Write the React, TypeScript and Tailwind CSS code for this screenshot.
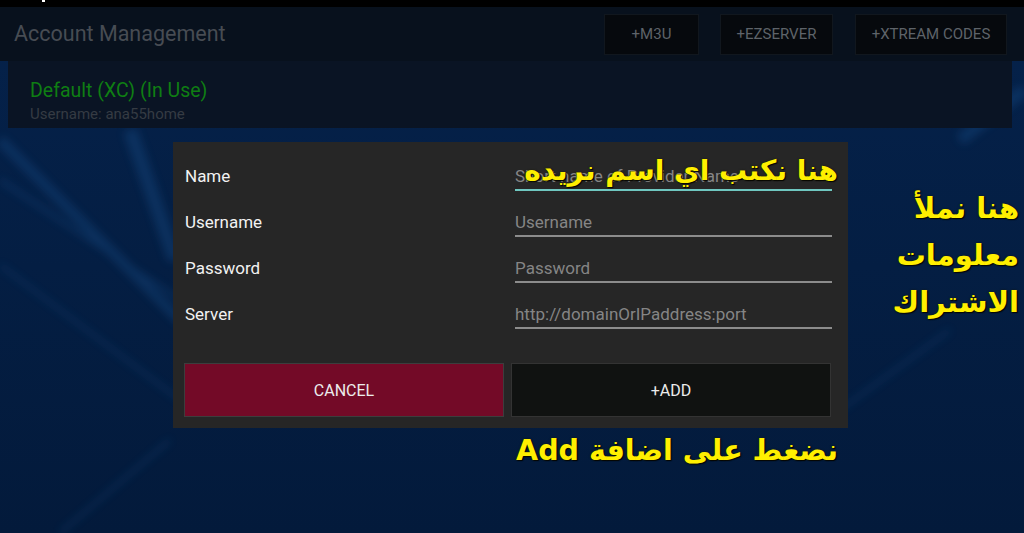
import React from "react";

const roboto = { fontFamily: "Roboto, 'Liberation Sans', sans-serif" };

function Field({ label, placeholder, focused }: { label: string; placeholder: string; focused?: boolean }) {
  return (
    <div className="flex h-[46px] items-center pl-[12px] pr-[16px]">
      <div className="pt-[2px] text-[17px] text-[#f2f2f2]">{label}</div>
      <div
        className={
          "ml-auto flex h-[30px] w-[317px] items-center border-b-2 pt-[3px] " +
          (focused ? "border-[#6fc7c0]" : "border-[#8c8c8c]")
        }
      >
        <span className="whitespace-nowrap text-[17px] text-[#858585]">{placeholder}</span>
      </div>
    </div>
  );
}

export default function App() {
  const ar = "whitespace-nowrap font-['DejaVu_Sans',sans-serif] font-bold text-[#ffef00] [text-shadow:0_0_2px_#1a1a00,1px_1px_1px_#000]";
  return (
    <div className="relative h-[533px] w-[1024px] overflow-hidden bg-[#041b3e]" style={roboto}>
      <svg className="absolute inset-0" width="1024" height="533" viewBox="0 0 1024 533">
        <defs>
          <filter id="b" x="-20%" y="-20%" width="140%" height="140%">
            <feGaussianBlur stdDeviation="4" />
          </filter>
          <linearGradient id="g" x1="0" y1="0" x2="0" y2="1">
            <stop offset="0" stopColor="#05224b" />
            <stop offset="1" stopColor="#031a3b" />
          </linearGradient>
        </defs>
        <rect width="1024" height="533" fill="url(#g)" />
        <g filter="url(#b)" stroke="#1d5a9a" fill="none" opacity="0.3">
          <path d="M0 140 L180 320" strokeWidth="10" />
          <path d="M0 180 L180 300" strokeWidth="4" />
          <path d="M0 265 L180 400" strokeWidth="3" />
          <path d="M840 410 L950 330" strokeWidth="3" />
          <path d="M60 533 L170 440" strokeWidth="3" />
          <path d="M960 140 L1024 90" strokeWidth="12" />
          <path d="M130 130 L175 260" strokeWidth="14" />
        </g>
      </svg>

      <div className="relative flex flex-col">
        <div className="relative h-[7px] bg-black">
          <span className="absolute left-[42px] top-0 h-[2px] w-[3px] bg-white" />
        </div>
        <div className="flex h-[54px] items-center bg-[#08111d]">
          <div className="pl-[14px] text-[21.5px] text-[#474c53]">Account Management</div>
          <div className="ml-auto mr-[17px] flex gap-[21px]">
            <div className="flex h-[41px] w-[95px] items-center justify-center border border-[#11171e] bg-[#06090d] text-[15px] text-[#5e6369]">
              +M3U
            </div>
            <div className="flex h-[41px] w-[113px] items-center justify-center border border-[#11171e] bg-[#06090d] text-[15px] text-[#5e6369]">
              +EZSERVER
            </div>
            <div className="ml-px flex h-[41px] w-[152px] items-center justify-center border border-[#11171e] bg-[#06090d] text-[15px] text-[#5e6369]">
              +XTREAM CODES
            </div>
          </div>
        </div>
        <div className="ml-[8px] mr-[12px] flex h-[67px] flex-col bg-[#0a1424] pl-[22px] pt-[18px]">
          <div className="text-[19.5px] leading-[24px] text-[#0f7e13]">Default (XC) (In Use)</div>
          <div className="mt-[2px] text-[15px] leading-[18px] text-[#353b43]">Username: ana55home</div>
        </div>

        <div className="ml-[173px] mt-[14px] flex h-[286px] w-[675px] flex-col bg-[#262626] pt-[11px]">
          <Field label="Name" placeholder="Short name of Provider Name" focused />
          <Field label="Username" placeholder="Username" />
          <Field label="Password" placeholder="Password" />
          <Field label="Server" placeholder="http://domainOrIPaddress:port" />
          <div className="mt-[26px] flex gap-[7px] pl-[11px]">
            <div className="flex h-[54px] w-[320px] items-center justify-center border border-[#3d3d3d] bg-[#730a27] pt-[2px] text-[16px] text-[#ececec]">
              CANCEL
            </div>
            <div className="flex h-[54px] w-[320px] items-center justify-center border border-[#333] bg-[#101211] pt-[2px] text-[16px] text-[#ececec]">
              +ADD
            </div>
          </div>
        </div>
      </div>

      <div dir="rtl" className={"absolute right-[186px] top-[148px] text-right text-[28px] leading-[46px] " + ar}>
        هنا نكتب اي اسم نريده
      </div>
      <div dir="rtl" className={"absolute right-[5px] top-[185px] text-right text-[29px] leading-[47px] " + ar}>
        <div>هنا نملأ</div>
        <div>معلومات</div>
        <div>الاشتراك</div>
      </div>
      <div dir="rtl" className={"absolute right-[186px] top-[429px] text-right text-[28.5px] leading-[44px] " + ar}>
        نضغط على اضافة Add
      </div>
    </div>
  );
}
